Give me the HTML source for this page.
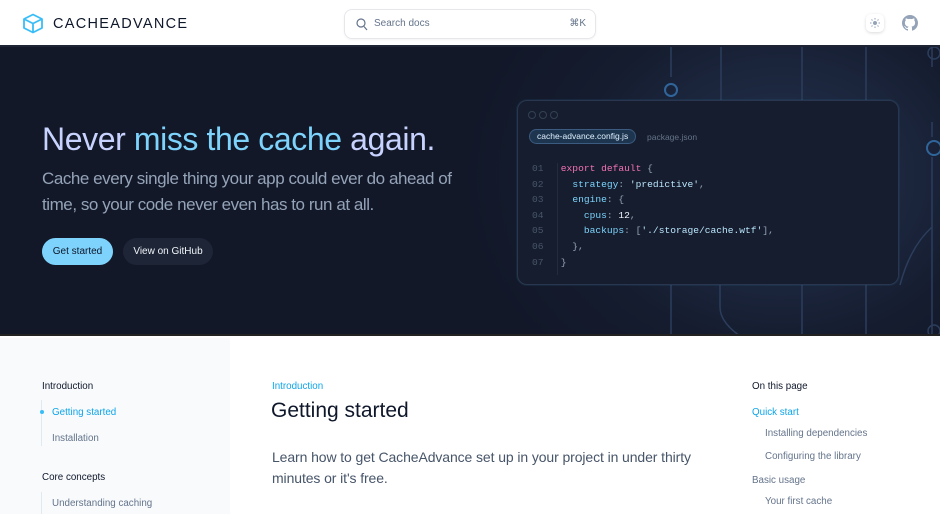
<!DOCTYPE html>
<html><head><meta charset="utf-8"><style>
*{margin:0;padding:0;box-sizing:border-box}
body{width:940px;height:514px;overflow:hidden;font-family:"Liberation Sans",sans-serif;background:#fff;position:relative}
.hdr{position:absolute;left:0;top:0;width:940px;height:47px;background:#fff;border-bottom:2px solid #1e2433}
.logo{position:absolute;left:22px;top:13px}
.brand{position:absolute;left:53px;top:16px;font-size:14.5px;letter-spacing:1.3px;color:#0f172a}
.search{position:absolute;left:344px;top:9px;width:252px;height:30px;border:1px solid #e5e7eb;border-radius:8px;box-shadow:0 1px 2px rgba(0,0,0,.05)}
.search span{position:absolute;top:8px;font-size:10px;color:#64748b}
.hero{position:absolute;left:0;top:47px;width:940px;height:289px;background:radial-gradient(ellipse 320px 260px at 780px 130px,#253552 0%,#151c2f 65%,#121828 100%);border-bottom:2px solid #222;overflow:hidden}
h1{position:absolute;left:42px;top:74px;font-size:32px;font-weight:400;color:#c7d2fe;letter-spacing:-.4px;white-space:nowrap}
h1 b{font-weight:400;color:#7dd3fc}
.sub{position:absolute;left:42px;top:119px;font-size:17px;line-height:26px;color:#94a3b8;width:460px;letter-spacing:-.45px}
.btn{position:absolute;top:191px;height:27px;border-radius:14px;font-size:10px;line-height:27px;text-align:center}
.code{position:absolute;left:517px;top:53px;width:382px;height:185px;border-radius:10px;background:#161d2e;border:1px solid #2a3650;box-shadow:0 0 0 1px rgba(56,189,248,.08)}
.dot{position:absolute;top:10px;width:8px;height:8px;border-radius:50%;border:1px solid #334155}
.tab1{position:absolute;left:11px;top:28px;height:15px;padding:0 7px;border-radius:8px;background:#1e3550;border:1px solid #3b5b80;font-size:8.5px;line-height:13px;color:#e0f2fe}
.tab2{position:absolute;left:129px;top:31px;font-size:8.5px;color:#64748b}
pre{position:absolute;left:14px;top:60px;font-family:"Liberation Mono",monospace;font-size:9.6px;line-height:15.6px;color:#94a3b8}
.ln{color:#475569}.k{color:#f472b6}.p{color:#7dd3fc}.s{color:#bae6fd}.n{color:#f1f5f9}
.side{position:absolute;left:0;top:338px;width:230px;height:176px;background:#f8fafc}
.t{position:absolute;font-size:9.8px;white-space:nowrap}
</style></head><body>
<div class="hdr">
<svg class="logo" width="22" height="21" viewBox="0 0 22 21"><path d="M11 1.5 L20 6 L20 15 L11 19.5 L2 15 L2 6 Z M2 6 L11 10.5 L20 6 M11 10.5 L11 19.5" fill="none" stroke="#38bdf8" stroke-width="1.8" stroke-linejoin="round"/></svg>
<div class="brand">CACHEADVANCE</div>
<div class="search"><svg style="position:absolute;left:11px;top:8px" width="12" height="13" viewBox="0 0 12 13"><circle cx="5" cy="5" r="4" fill="none" stroke="#64748b" stroke-width="1.2"/><path d="M8 8.5 11 12" stroke="#64748b" stroke-width="1.2"/></svg><span style="left:29px">Search docs</span><span style="right:9px">⌘K</span></div>
<div style="position:absolute;left:866px;top:14px;width:18px;height:18px;border-radius:5px;box-shadow:0 1px 3px rgba(0,0,0,.15)"><svg width="18" height="18" viewBox="0 0 18 18"><circle cx="9" cy="9" r="2" fill="#94a3b8"/><g stroke="#94a3b8" stroke-width="1"><path d="M9 4v1.5M9 12.5V14M4 9h1.5M12.5 9H14M5.5 5.5l1 1M11.5 11.5l1 1M5.5 12.5l1-1M11.5 6.5l1-1"/></g></svg></div>
<svg style="position:absolute;left:902px;top:14px" width="16" height="18" viewBox="0 0 16 16"><path fill="#94a3b8" d="M8 0C3.580 0 0 3.58 0 8c0 3.54 2.290 6.53 5.470 7.59.4.07.55-.17.55-.38v-1.34c-2.230.49-2.7-1.070-2.7-1.070-.36-.92-.89-1.170-.89-1.170-.73-.5.05-.49.05-.49.8.06 1.230.83 1.230.83.71 1.230 1.870.87 2.330.67.07-.52.28-.87.5-1.070-1.780-.2-3.640-.89-3.640-3.960 0-.87.31-1.590.83-2.150-.08-.2-.36-1.020.08-2.120 0 0 .67-.21 2.2.82a7.6 7.6 0 0 1 4 0c1.530-1.040 2.2-.82 2.2-.82.44 1.1.16 1.920.08 2.120.51.56.82 1.270.82 2.150 0 3.080-1.870 3.750-3.650 3.950.29.25.54.73.54 1.480v2.2c0 .21.15.46.55.38A8 8 0 0 0 16 8c0-4.420-3.580-8-8-8z"/></svg>
</div>
<div class="hero">
<svg style="position:absolute;left:0;top:0" width="940" height="289" viewBox="0 0 940 289"><g fill="none" stroke="#2c3d5c" stroke-width="1.5"><path d="M671 0V30M671 238V289M721 0V60M802 0V60M802 238V289M866 0V60M866 238V289M932 0V20M932 110V289M932 90V75M720 238V260Q720 275 740 289M900 238Q910 200 932 180"/></g><g fill="none" stroke="#3b82c4" stroke-width="2" opacity=".7"><circle cx="671" cy="43" r="6"/><circle cx="934" cy="101" r="7"/></g><g fill="none" stroke="#2c3d5c" stroke-width="1.5"><circle cx="934" cy="6" r="6"/><circle cx="934" cy="284" r="6"/></g></svg>
<h1>Never <b>miss the cache</b> again.</h1>
<div class="sub">Cache every single thing your app could ever do ahead of<br>time, so your code never even has to run at all.</div>
<div class="btn" style="left:42px;width:71px;background:#7dd3fc;color:#0f172a">Get started</div>
<div class="btn" style="left:123px;width:90px;background:#1e2536;color:#f1f5f9">View on GitHub</div>
<div class="code">
<div class="dot" style="left:10px"></div><div class="dot" style="left:21px"></div><div class="dot" style="left:32px"></div>
<div class="tab1">cache-advance.config.js</div><div class="tab2">package.json</div>
<pre><span class="ln">01</span>   <span class="k">export default</span> {
<span class="ln">02</span>     <span class="p">strategy</span>: <span class="s">'predictive'</span>,
<span class="ln">03</span>     <span class="p">engine</span>: {
<span class="ln">04</span>       <span class="p">cpus</span>: <span class="n">12</span>,
<span class="ln">05</span>       <span class="p">backups</span>: [<span class="s">'./storage/cache.wtf'</span>],
<span class="ln">06</span>     },
<span class="ln">07</span>   }</pre>
<div style="position:absolute;left:39px;top:62px;width:1px;height:112px;background:#232c3f"></div>
</div>
</div>
<div class="side"></div>
<div class="t" style="left:42px;top:381px;color:#0f172a">Introduction</div>
<div style="position:absolute;left:41px;top:400px;width:1px;height:46px;background:#e2e8f0"></div>
<div style="position:absolute;left:40px;top:410px;width:4px;height:4px;border-radius:50%;background:#38bdf8"></div>
<div class="t" style="left:52px;top:407px;color:#0ea5e9">Getting started</div>
<div class="t" style="left:52px;top:433px;color:#64748b">Installation</div>
<div class="t" style="left:42px;top:472px;color:#0f172a">Core concepts</div>
<div style="position:absolute;left:41px;top:492px;width:1px;height:22px;background:#e2e8f0"></div>
<div class="t" style="left:52px;top:498px;color:#64748b">Understanding caching</div>
<div class="t" style="left:272px;top:381px;color:#0ea5e9">Introduction</div>
<div class="t" style="left:271px;top:399px;font-size:21px;color:#0f172a">Getting started</div>
<div style="position:absolute;left:272px;top:447px;width:460px;font-size:14px;line-height:21px;color:#475569;letter-spacing:-.1px">Learn how to get CacheAdvance set up in your project in under thirty<br>minutes or it's free.</div>
<div class="t" style="left:752px;top:381px;color:#0f172a">On this page</div>
<div class="t" style="left:752px;top:407px;color:#0ea5e9">Quick start</div>
<div class="t" style="left:765px;top:428px;color:#64748b">Installing dependencies</div>
<div class="t" style="left:765px;top:451px;color:#64748b">Configuring the library</div>
<div class="t" style="left:752px;top:475px;color:#64748b">Basic usage</div>
<div class="t" style="left:765px;top:496px;color:#64748b">Your first cache</div>
</body></html>
